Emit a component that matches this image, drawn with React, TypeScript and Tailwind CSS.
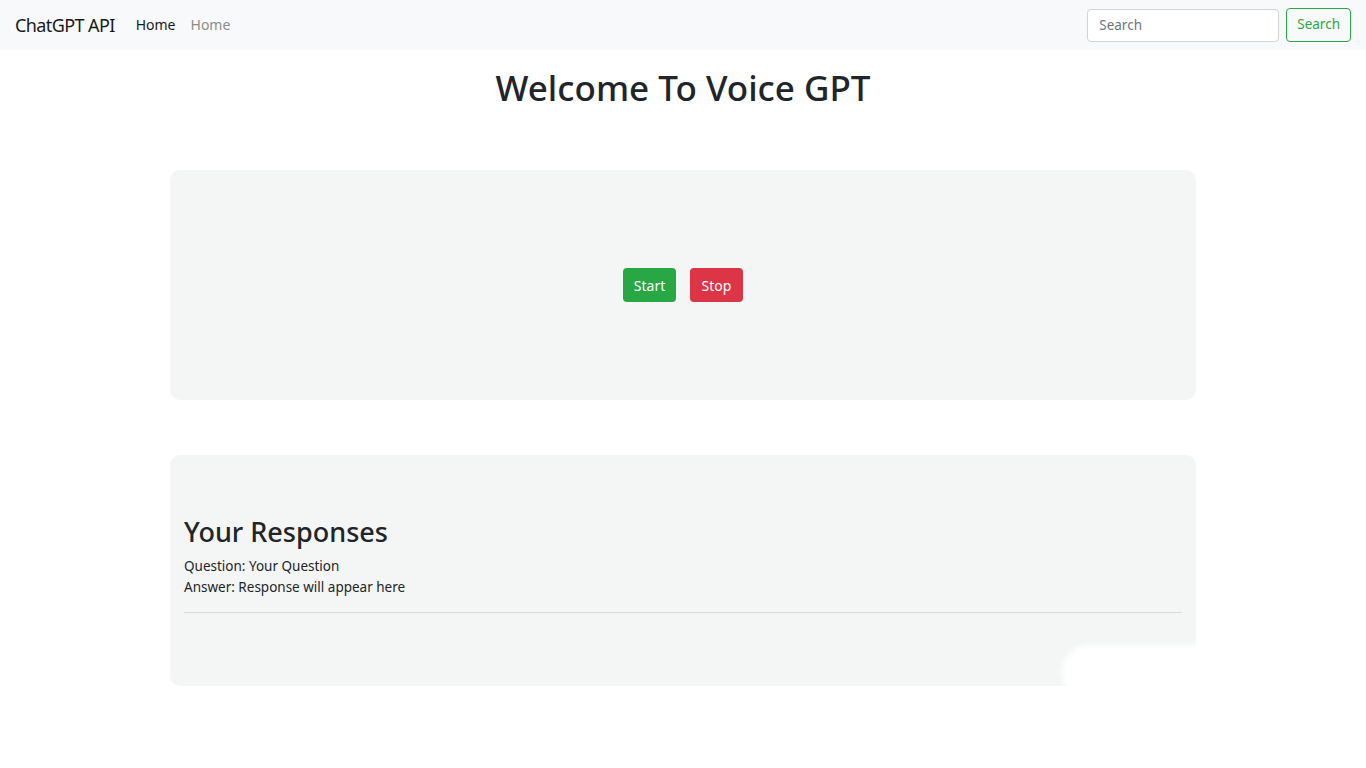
import React from 'react';

const font = { fontFamily: '"Noto Sans", "Open Sans", sans-serif' };

function Navbar() {
  return (
    <nav className="flex items-center h-[50px] bg-[#f8f9fa] px-[15px]">
      <span className="text-[18px] tracking-[-0.6px] text-[#1a1a1a] mr-[21px] leading-none">ChatGPT API</span>
      <a className="text-[14px] text-[#1a1a1a] leading-none">Home</a>
      <a className="text-[14px] text-[#8c8c8c] leading-none ml-[15px]">Home</a>
      <div className="ml-auto flex items-center gap-[7px]">
        <input
          className="w-[192px] h-[33px] rounded-[4px] border border-[#ced4da] bg-white px-[11px] text-[13.5px] text-[#495057] placeholder:text-[#6c757d] outline-none"
          placeholder="Search"
          style={font}
        />
        <button className="h-[34px] px-[10px] rounded-[4px] border border-[#28a745] text-[#28a745] text-[13.5px] leading-none" style={font}>
          Search
        </button>
      </div>
    </nav>
  );
}

export default function App() {
  return (
    <div className="relative min-h-[768px] bg-white text-[#212529]" style={font}>
      <Navbar />
      <h1 className="text-center text-[35px] font-medium leading-[1.2] mt-[17px]">Welcome To Voice GPT</h1>

      <div className="mx-auto w-[1026px] mt-[61px] h-[230px] rounded-[10px] bg-[#f4f5f5] flex items-center justify-center gap-[14px]">
        <button className="h-[34px] w-[53px] rounded-[4px] bg-[#28a745] text-white text-[14px]">Start</button>
        <button className="h-[34px] w-[53px] rounded-[4px] bg-[#dc3545] text-white text-[14px]">Stop</button>
      </div>

      <div className="mx-auto w-[1026px] mt-[55px] h-[231px] rounded-[10px] bg-[#f4f5f5] px-[14px] pt-[61px]">
        <h2 className="text-[27px] font-medium leading-[1.2] mb-[8px]">Your Responses</h2>
        <p className="text-[13.5px] leading-[21px]">Question: Your Question</p>
        <p className="text-[13.5px] leading-[21px]">Answer: Response will appear here</p>
        <hr className="mt-[14px] border-t border-[#d9dadb]" />
      </div>

      <div className="absolute left-[1062px] top-[645px] w-[250px] h-[55px] rounded-[30px] bg-white blur-[3px]" />
    </div>
  );
}
